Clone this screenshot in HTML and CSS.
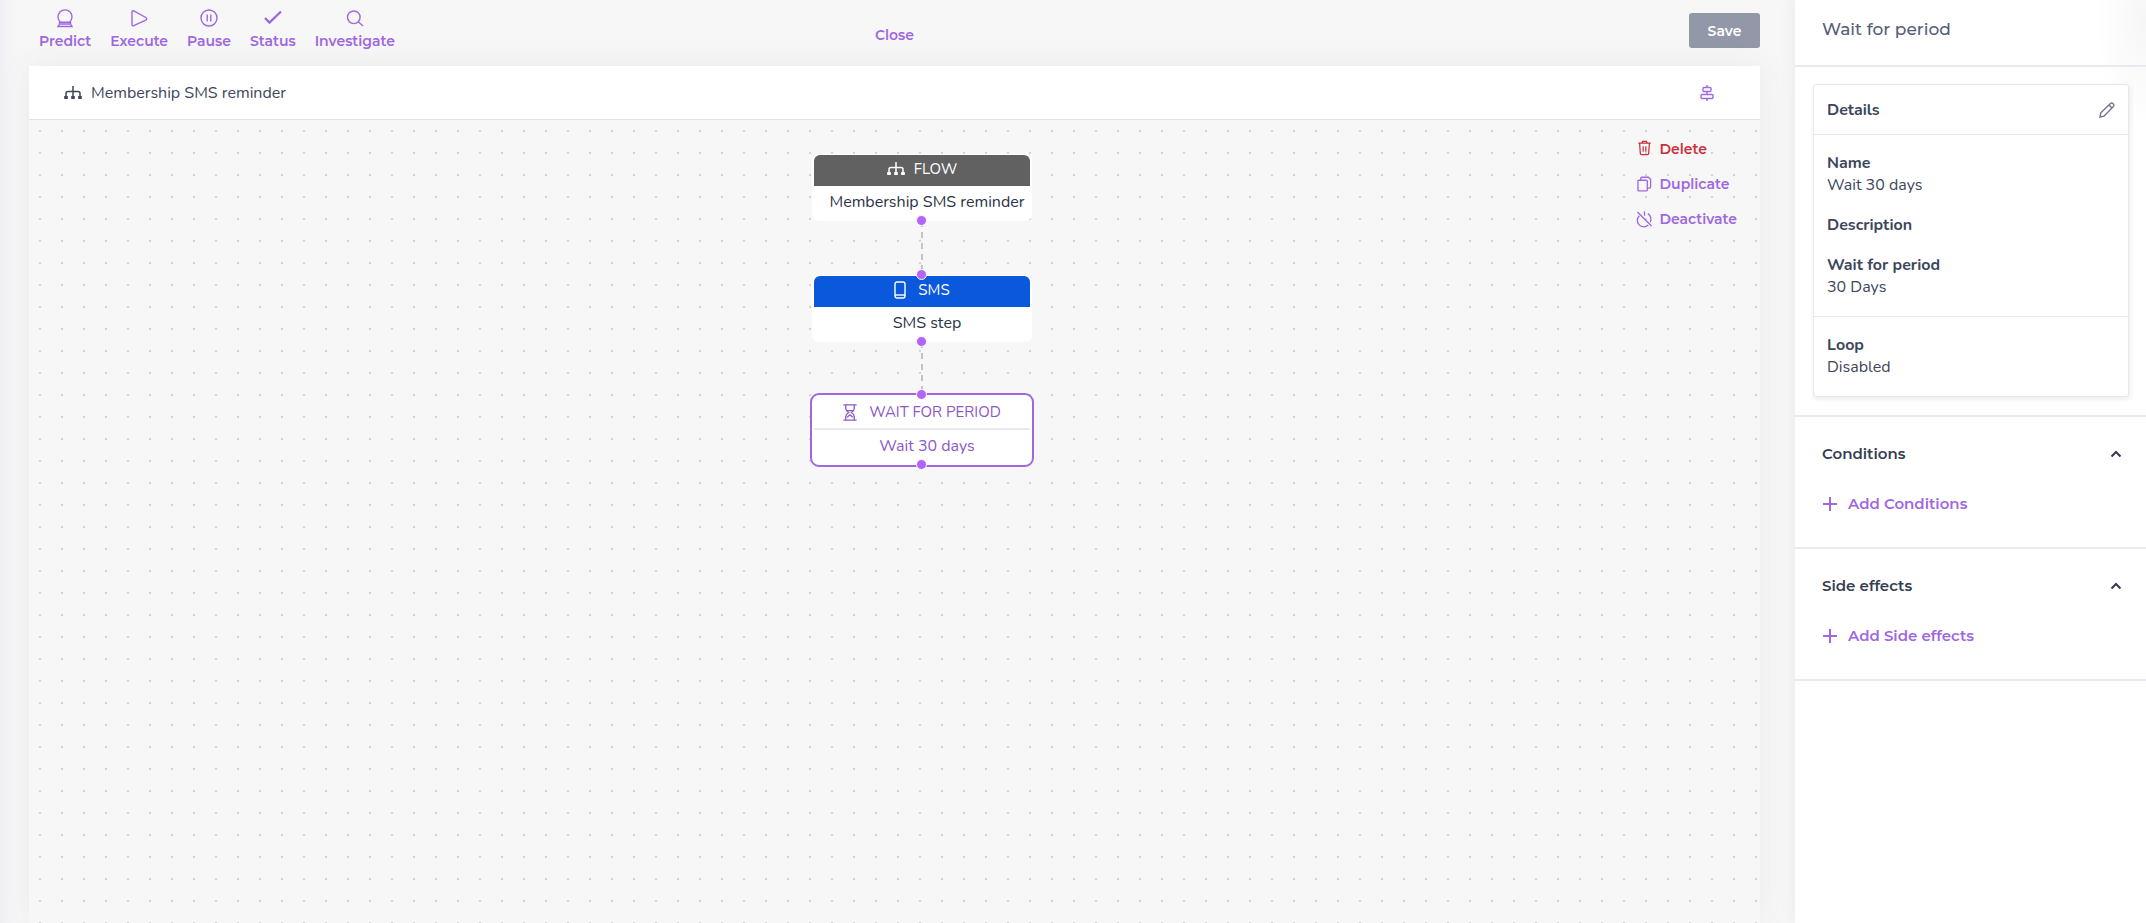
FILE: index.html
```html
<!DOCTYPE html>
<html lang="en">
<head>
    <meta charset="UTF-8">
    <meta name="viewport" content="width=device-width, initial-scale=1.0">
    <title>Membership SMS reminder</title>
    <link rel="stylesheet" href="styles.css">
</head>
<body>
<!-- shared icon shapes -->
<svg class="sprite" aria-hidden="true">
    <symbol id="icon-flow" viewBox="0 0 18 14">
        <path d="M9 0v11M2 11V7.500q0-2 2-2h10q2 0 2 2V11" fill="none" stroke="currentColor" stroke-width="1.500"/>
        <path d="M.2 10h3.600v3H.2zM7.200 10h3.600v3H7.200zM14.200 10h3.600v3h-3.600z" fill="currentColor"/>
    </symbol>
    <symbol id="icon-chevron" viewBox="0 0 12 8">
        <path d="M1.500 6.500 6 2l4.500 4.500" fill="none" stroke="currentColor" stroke-width="2"/>
    </symbol>
    <symbol id="icon-plus" viewBox="0 0 16 16">
        <path d="M8 1v14M1 8h14" fill="none" stroke="currentColor" stroke-width="2"/>
    </symbol>
</svg>

<div class="app">
    <main class="main">
        <div class="toolbar">
            <div class="tools">
                <button class="tool" type="button">
                    <svg class="icon" viewBox="0 0 18 18"><path d="M4.500 13.200a7 7 0 1 1 9 0M3.500 13.200h11v1.800h-11zM3.500 15l-1.500 2.500h14L14.500 15"/></svg>
                    Predict
                </button>
                <button class="tool" type="button">
                    <svg class="icon" viewBox="0 0 18 18"><path d="M2 3v12.500q0 1.800 1.800 1.200l12-5.500q1.800-1.200 0-2.700l-12-6.500Q2 1.300 2 3z"/></svg>
                    Execute
                </button>
                <button class="tool" type="button">
                    <svg class="icon" viewBox="0 0 18 18"><circle cx="9" cy="9" r="8"/><path d="M7.200 5.500v7M10.800 5.500v7"/></svg>
                    Pause
                </button>
                <button class="tool" type="button">
                    <svg class="icon bold" viewBox="0 0 18 18"><path d="m1 9 4.500 4.500L17 2.500"/></svg>
                    Status
                </button>
                <button class="tool" type="button">
                    <svg class="icon" viewBox="0 0 18 18"><circle cx="7.800" cy="8.300" r="6.300"/><path d="m12.300 12.800 4.700 4.200"/></svg>
                    Investigate
                </button>
            </div>
            <button class="close" type="button">Close</button>
            <button class="save" type="button">Save</button>
        </div>

        <section class="editor">
            <header class="editor-header">
                <svg class="flow-icon"><use href="#icon-flow"/></svg>
                <h1 class="editor-title">Membership SMS reminder</h1>
                <button class="align" type="button" aria-label="Align">
                    <svg class="icon" viewBox="0 0 14 16"><path d="M7 0v2.500M7 6.500v3M7 13.500V16"/><rect x="3" y="2.500" width="8" height="4" rx="1"/><rect x="1" y="9.500" width="12" height="4" rx="1"/></svg>
                </button>
            </header>

            <div class="canvas">
                <div class="link link-1"></div>
                <div class="link link-2"></div>

                <div class="node node-flow">
                    <div class="node-type"><svg class="flow-icon"><use href="#icon-flow"/></svg>FLOW</div>
                    <div class="node-name">Membership SMS reminder</div>
                    <span class="handle bottom"></span>
                </div>
                <div class="node node-sms">
                    <div class="node-type">
                        <svg class="icon phone" viewBox="0 0 12 18"><rect x="1" y="1" width="10" height="16" rx="2"/><path d="M1 14h10"/></svg>
                        SMS
                    </div>
                    <div class="node-name">SMS step</div>
                    <span class="handle top"></span>
                    <span class="handle bottom"></span>
                </div>
                <div class="node node-wait">
                    <div class="node-type">
                        <svg class="icon glass" viewBox="0 0 14 18"><path d="M0 1h14M0 17h14M2.500 1v3.500Q2.500 7 5.500 9q-3 2-3 4.500V17M11.500 1v3.500Q11.500 7 8.500 9q3 2 3 4.500V17M4 7h6M4 14l3-2.500 3 2.500"/></svg>
                        WAIT FOR PERIOD
                    </div>
                    <div class="node-name">Wait 30 days</div>
                    <span class="handle top"></span>
                    <span class="handle bottom"></span>
                </div>

                <div class="actions">
                    <button class="action delete" type="button">
                        <svg class="icon" viewBox="0 0 16 18"><path d="M1 2.500h14M2.500 2.500l.8 11.500q.1 1.200 1.300 1.200h6.800q1.200 0 1.300-1.200l.8-11.500M5 2.500l.8-2h4.400l.8 2M6.500 6v6M9.500 6v6"/></svg>
                        Delete
                    </button>
                    <button class="action" type="button">
                        <svg class="icon" viewBox="0 0 16 16"><rect x="1" y="4" width="10" height="11.300" rx="1"/><path d="M4 4V2q0-1.200 1.200-1.200h7L14.500 3v8.300q0 1-1 1H11"/></svg>
                        Duplicate
                    </button>
                    <button class="action" type="button">
                        <svg class="icon" viewBox="0 0 16 16"><path d="m.5.500 15 15M8 0v4.500M2.500 4.500a6.700 6.700 0 0 0 9.500 10M11.500 2.300a6.700 6.700 0 0 1 2.500 9.200"/></svg>
                        Deactivate
                    </button>
                </div>
            </div>
        </section>
    </main>

    <aside class="panel">
        <header class="panel-header">
            <h2 class="panel-title">Wait for period</h2>
        </header>

        <section class="panel-details">
            <div class="card">
                <div class="card-header">
                    <h3 class="card-title">Details</h3>
                    <button class="edit" type="button" aria-label="Edit details">
                        <svg class="icon" viewBox="0 0 16 16"><path d="m1 15 .8-4.200L11.500 1.500q1.300-1 2.500.2l.4.400q1.200 1.200 0 2.500L5 14.200zM10 3l3 3"/></svg>
                    </button>
                </div>
                <dl class="fields">
                    <div><dt>Name</dt><dd>Wait 30 days</dd></div>
                    <div><dt>Description</dt></div>
                    <div><dt>Wait for period</dt><dd>30 Days</dd></div>
                </dl>
                <dl class="fields">
                    <div><dt>Loop</dt><dd>Disabled</dd></div>
                </dl>
            </div>
        </section>

        <section class="group">
            <button class="group-toggle" type="button">Conditions <svg class="chevron"><use href="#icon-chevron"/></svg></button>
            <button class="add" type="button"><svg class="plus"><use href="#icon-plus"/></svg>Add Conditions</button>
        </section>
        <section class="group">
            <button class="group-toggle" type="button">Side effects <svg class="chevron"><use href="#icon-chevron"/></svg></button>
            <button class="add" type="button"><svg class="plus"><use href="#icon-plus"/></svg>Add Side effects</button>
        </section>
    </aside>
</div>
</body>
</html>
```
FILE: styles.css
```css
* {
    box-sizing: border-box;
}

body {
    margin: 0;
    background-color: #f7f7f7;
    color: #3d465c;
    font-family: Nunito, Lato, sans-serif;
    font-size: 16px;
    line-height: 22px;
}

h1, h2, h3, dl, dd {
    margin: 0;
    font-size: inherit;
    font-weight: inherit;
}

button {
    padding: 0;
    border: 0;
    background: none;
    color: #9f67e0;
    font-family: Metropolis, Montserrat, Inter, sans-serif;
    font-size: 14px;
    font-weight: 600;
    line-height: 20px;
    cursor: pointer;
}

.sprite {
    display: none;
}

.icon {
    display: block;
    width: 18px;
    height: 18px;
    fill: none;
    stroke: currentColor;
    stroke-width: 1.4;
    overflow: visible;
}

.icon.bold {
    stroke-width: 2.4;
}

.flow-icon {
    width: 18px;
    height: 14px;
}

.app {
    display: flex;
    min-height: 100vh;
}

.main {
    flex: 1;
    display: flex;
    flex-direction: column;
    padding: 0 35px 0 29px;
    box-shadow: inset 16px 0 16px -12px #ececf2;
}

/* toolbar */
.toolbar {
    display: grid;
    grid-template-columns: 1fr auto 1fr;
    height: 66px;
    padding-top: 9px;
    align-items: start;
}

.tools {
    display: flex;
    gap: 19px;
    padding-left: 10px;
}

.tool {
    display: flex;
    flex-direction: column;
    align-items: center;
    gap: 4px;
}

.close {
    margin-top: 16px;
}

.save {
    justify-self: end;
    width: 71px;
    height: 35px;
    margin-top: 4px;
    border-radius: 3px;
    background-color: #9298a7;
    color: white;
}

/* editor */
.editor {
    flex: 1;
    display: flex;
    flex-direction: column;
    box-shadow: 0 0 30px rgba(80, 80, 120, 0.08);
}

.editor-header {
    display: flex;
    align-items: center;
    gap: 9px;
    height: 54px;
    padding: 0 46px 0 35px;
    border-bottom: 1px solid #e2e3e6;
    background-color: white;
}

.editor-title {
    flex: 1;
}

.align .icon {
    width: 14px;
    height: 16px;
}

.canvas {
    position: relative;
    flex: 1;
    background-color: #f7f7f7;
    background-image: conic-gradient(from 90deg at 20px 20px, #d3d3dc 90deg, transparent 0);
    background-position: 12px 12px;
    background-size: 22px 22px;
}

.node {
    position: absolute;
    left: 783px;
    width: 220px;
    height: 67px;
    padding: 1px 2px;
    border-radius: 7px;
    background-color: white;
    color: #2b3347;
    text-align: center;
}

.node-flow {
    top: 34px;
}

.node-sms {
    top: 155px;
}

.node-wait {
    top: 273px;
    left: 781px;
    width: 224px;
    height: 74px;
    border: 2px solid #9f67e0;
    border-radius: 9px;
    color: #8a58c8;
}

.node-type {
    display: flex;
    align-items: center;
    justify-content: center;
    gap: 9px;
    height: 31px;
    padding-bottom: 3px;
    border-radius: 6px 6px 0 0;
    font-size: 15px;
}

.node-name {
    padding: 5px 0 0 10px;
}

.node-flow .node-type {
    background-color: #616161;
    color: white;
}

.node-sms .node-type {
    background-color: #0a58db;
    color: white;
}

.node-wait .node-type {
    height: 34px;
    padding-bottom: 0;
    border-bottom: 2px solid #e9e9ef;
    border-radius: 0;
}

.icon.phone {
    width: 12px;
    margin-right: 3px;
}

.icon.glass {
    width: 14px;
    height: 17px;
    margin-right: 3px;
}

.handle {
    position: absolute;
    left: 50%;
    width: 11px;
    height: 11px;
    margin-left: -6px;
    border: 1px solid white;
    border-radius: 50%;
    background-color: #b264fd;
}

.handle.top {
    top: -6px;
}

.handle.bottom {
    bottom: -5px;
}

.link {
    position: absolute;
    left: 892px;
    width: 2px;
    height: 54px;
    background: repeating-linear-gradient(#c4c4c4 0 6px, transparent 6px 11px);
}

.link-1 {
    top: 101px;
}

.link-2 {
    top: 222px;
}

.actions {
    position: absolute;
    top: 19px;
    right: 23px;
    display: flex;
    flex-direction: column;
    gap: 15px;
}

.action {
    display: flex;
    align-items: center;
    gap: 8px;
}

.action .icon {
    width: 15px;
    height: 16px;
}

.delete {
    color: #cb2f3c;
}

/* side panel */
.panel {
    width: 351px;
    background: radial-gradient(50px 110px at 100% 20px, #f6f6f7, transparent) white;
    box-shadow: 0 0 16px rgba(0, 0, 0, 0.07);
}

.panel-header {
    height: 67px;
    padding: 18px 27px;
    border-bottom: 2px solid #e9e9ef;
}

.panel-title {
    color: #555e76;
    font-family: Metropolis, Montserrat, Inter, sans-serif;
    font-size: 17px;
    font-weight: 500;
}

.panel-details {
    padding: 17px 17px 18px 18px;
    border-bottom: 2px solid #e9e9ef;
}

.card {
    border: 1px solid #e7e7ed;
    border-radius: 3px;
    background-color: white;
    box-shadow: 1px 2px 5px rgba(60, 60, 90, 0.1);
}

.card-header {
    display: flex;
    align-items: center;
    justify-content: space-between;
    height: 49px;
    padding: 0 13px;
}

.card-title, dt {
    font-weight: 700;
}

.edit {
    color: #6f7788;
}

.edit .icon {
    width: 16px;
    height: 16px;
}

.fields {
    display: flex;
    flex-direction: column;
    gap: 18px;
    padding: 17px 13px 18px;
    border-top: 1px solid #e7e7ed;
}

.group {
    height: 132px;
    padding: 27px 24px 0 27px;
    border-bottom: 2px solid #e9e9ef;
}

.group-toggle {
    display: flex;
    align-items: center;
    justify-content: space-between;
    width: 100%;
    margin-bottom: 30px;
    color: #333c50;
    font-size: 15px;
}

.chevron {
    width: 12px;
    height: 8px;
}

.add {
    display: flex;
    align-items: center;
    gap: 10px;
    font-size: 15px;
}

.plus {
    width: 16px;
    height: 16px;
}
```
